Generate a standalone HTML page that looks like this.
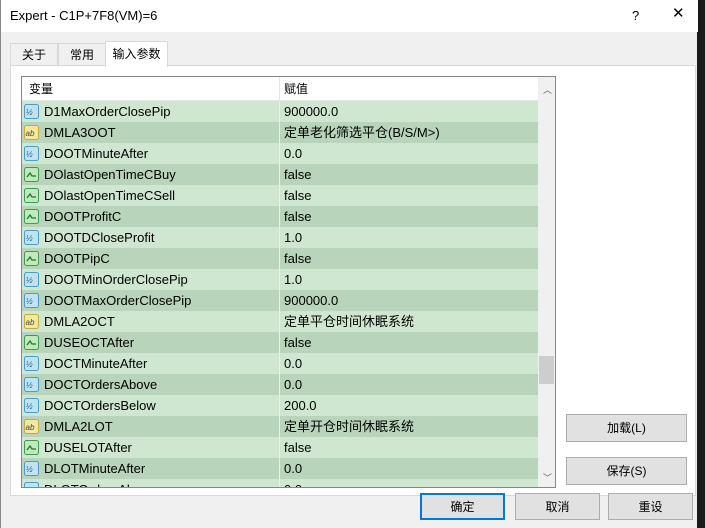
<!DOCTYPE html>
<html><head><meta charset="utf-8"><style>
*{margin:0;padding:0;box-sizing:border-box}
body{width:705px;height:528px;background:#1a1a1a;position:relative;overflow:hidden;font-family:"Liberation Sans","Noto Sans CJK SC",sans-serif;font-size:12px;color:#000;line-height:15px}
.win{position:absolute;left:0;top:0;width:697px;height:528px;background:#f0f0f0;border-left:1px solid #888}
.title{position:absolute;left:0;top:0;width:697px;height:32px;background:#fff;font-size:13px}
.title span{position:absolute;left:9px;top:8px}
.tab{position:absolute;top:43px;height:23px;border:1px solid #d9d9d9;border-bottom:none;background:#f0f0f0;padding:4px 0 0 0;text-align:center;font-size:12px}
.panel{position:absolute;left:9px;top:65px;width:686px;height:431px;background:#fff;border:1px solid #d9d9d9}
.list{position:absolute;left:20px;top:76px;width:535px;height:412px;border:1px solid #828790;background:#fff;overflow:hidden}
.hdr{position:absolute;left:0;top:0;width:516px;height:24px;background:#fff;border-bottom:1px solid #e5e5e5}
.hdr span{position:absolute;top:5px}
.row{position:absolute;left:0;width:516px;height:21px;font-size:13px}
.row.l{background:#cfe7d1}.row.d{background:#b8d4ba}
.row .n{position:absolute;left:22px;top:3px;white-space:nowrap}
.row .v{position:absolute;left:262px;top:3px;white-space:nowrap}
.row .sep{position:absolute;left:257px;top:0;width:1px;height:21px;background:#e8f2e8}
.row i{position:absolute;left:2px;top:3px;width:15px;height:15px}
.sb{position:absolute;left:516px;top:0;width:17px;height:410px;background:#f0f0f0}
.btn{position:absolute;background:#e1e1e1;border:1px solid #adadad;text-align:center;font-size:12px}
</style></head><body>
<div class="win">
<div class="title"><span>Expert - C1P+7F8(VM)=6</span><span style="left:631px">?</span><span style="left:671px;font-size:15px;top:6px">✕</span></div>
<div class="tab" style="left:9px;width:48px">关于</div>
<div class="tab" style="left:57px;width:48px">常用</div>
<div class="panel"></div>
<div class="tab" style="left:104px;top:41px;height:26px;width:63px;background:#fff;padding-top:5px">输入参数</div>
<div class="list">
<div class="hdr"><span style="left:7px">变量</span><span style="left:262px">赋值</span><div style="position:absolute;left:257px;top:0;width:1px;height:24px;background:#e5e5e5"></div></div>
<div id="rows"></div>
<div class="sb"><div style="position:absolute;left:5px;top:6px;font-size:9px;color:#606060">︿</div><div style="position:absolute;left:1px;top:279px;width:15px;height:28px;background:#cdcdcd"></div><div style="position:absolute;left:5px;top:394px;font-size:9px;color:#606060">﹀</div></div>
</div>
<div class="btn" style="left:565px;top:414px;width:121px;height:28px;padding-top:6px">加载(L)</div>
<div class="btn" style="left:565px;top:457px;width:121px;height:28px;padding-top:6px">保存(S)</div>
<div class="btn" style="left:419px;top:493px;width:85px;height:27px;padding-top:5px;border:2px solid #0078d7">确定</div>
<div class="btn" style="left:514px;top:493px;width:85px;height:27px;padding-top:6px">取消</div>
<div class="btn" style="left:607px;top:493px;width:85px;height:27px;padding-top:6px">重设</div>
</div>
<script>
var R=[["n","D1MaxOrderClosePip","900000.0"],["a","DMLA3OOT","定单老化筛选平仓(B/S/M>)"],["n","DOOTMinuteAfter","0.0"],["b","DOlastOpenTimeCBuy","false"],["b","DOlastOpenTimeCSell","false"],["b","DOOTProfitC","false"],["n","DOOTDCloseProfit","1.0"],["b","DOOTPipC","false"],["n","DOOTMinOrderClosePip","1.0"],["n","DOOTMaxOrderClosePip","900000.0"],["a","DMLA2OCT","定单平仓时间休眠系统"],["b","DUSEOCTAfter","false"],["n","DOCTMinuteAfter","0.0"],["n","DOCTOrdersAbove","0.0"],["n","DOCTOrdersBelow","200.0"],["a","DMLA2LOT","定单开仓时间休眠系统"],["b","DUSELOTAfter","false"],["n","DLOTMinuteAfter","0.0"],["n","DLOTOrdersAbove","0.0"]];
var ic={n:'<svg width="15" height="15"><rect x=".5" y=".5" width="14" height="14" rx="2" fill="#bfe3f5" stroke="#4a9cc9"/><text x="2" y="11" font-size="8" fill="#1a5e8a" font-family="Liberation Sans">½</text></svg>',
a:'<svg width="15" height="15"><rect x=".5" y=".5" width="14" height="14" rx="2" fill="#f6e7a0" stroke="#c8a93a"/><text x="1.5" y="11" font-size="8" fill="#444" font-family="Liberation Sans">ab</text></svg>',
b:'<svg width="15" height="15"><rect x=".5" y=".5" width="14" height="14" rx="2" fill="#bfeac0" stroke="#3aa043"/><path d="M3 10 L6 6 L8 9 L12 9" stroke="#1c7a24" fill="none" stroke-width="1.3"/></svg>'};
var h='';R.forEach(function(r,i){h+='<div class="row '+(i%2?'d':'l')+'" style="top:'+(24+i*21)+'px"><i>'+ic[r[0]]+'</i><span class="n">'+r[1]+'</span><div class="sep"></div><span class="v">'+r[2]+'</span></div>';});
document.getElementById('rows').innerHTML=h;
</script>
</body></html>
